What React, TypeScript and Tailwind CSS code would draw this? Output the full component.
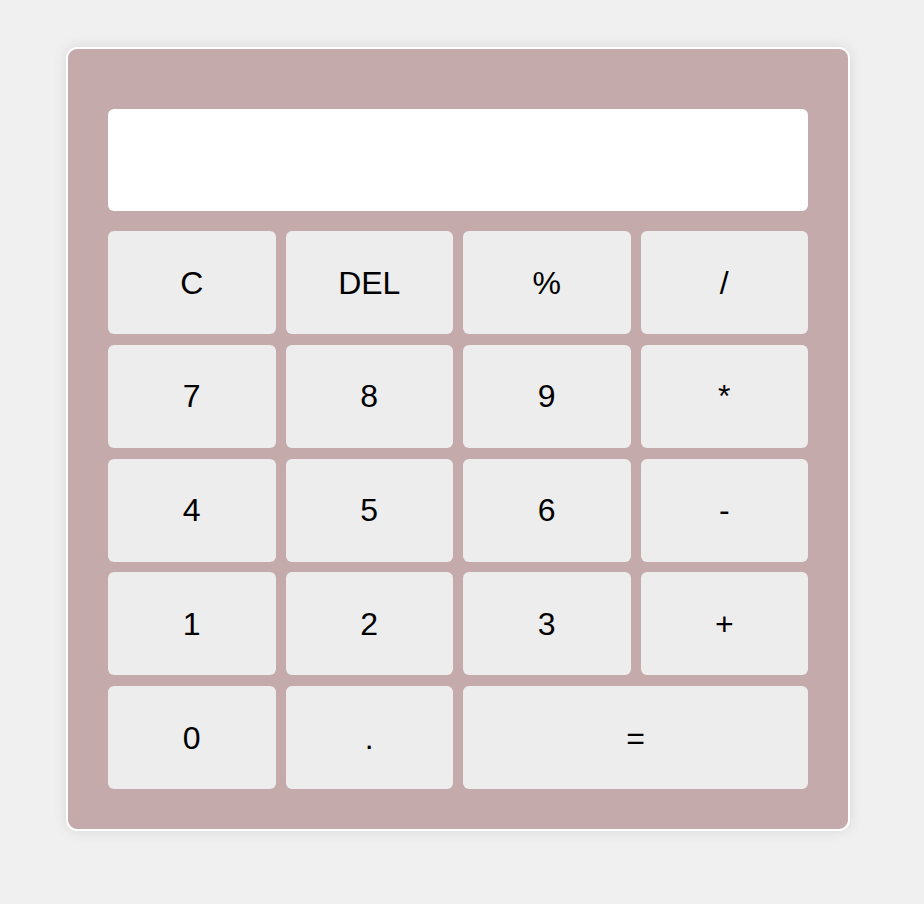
const keys = [
	{ label: 'C' },
	{ label: 'DEL' },
	{ label: '%' },
	{ label: '/' },
	{ label: '7' },
	{ label: '8' },
	{ label: '9' },
	{ label: '*' },
	{ label: '4' },
	{ label: '5' },
	{ label: '6' },
	{ label: '-' },
	{ label: '1' },
	{ label: '2' },
	{ label: '3' },
	{ label: '+' },
	{ label: '0' },
	{ label: '.' },
	{ label: '=', wide: true },
]

const App = () => {
	return (
		<div className="min-h-screen bg-[#f0f0f0] pt-[47px] pl-[66px] font-['Liberation_Sans',Arial,sans-serif]">
			{/* Calculator body */}
			<div className="w-[784px] rounded-[11px] border-2 border-white bg-[#c4aaaa] px-10 pt-[60px] pb-[40px] shadow-[0_0_14px_rgba(0,0,0,0.1)]">
				{/* Display */}
				<div className="h-[102px] w-full rounded-md bg-white mb-5"></div>

				{/* Keypad */}
				<div className="grid grid-cols-4 gap-x-[10px] gap-y-[10.75px]">
					{keys.map((k) => (
						<button
							key={k.label}
							className={`h-[103px] rounded-md bg-[#ededed] text-[32px] text-black flex items-center justify-center ${
								k.wide ? 'col-span-2' : ''
							}`}
						>
							{k.label}
						</button>
					))}
				</div>
			</div>
		</div>
	)
}

export default App
